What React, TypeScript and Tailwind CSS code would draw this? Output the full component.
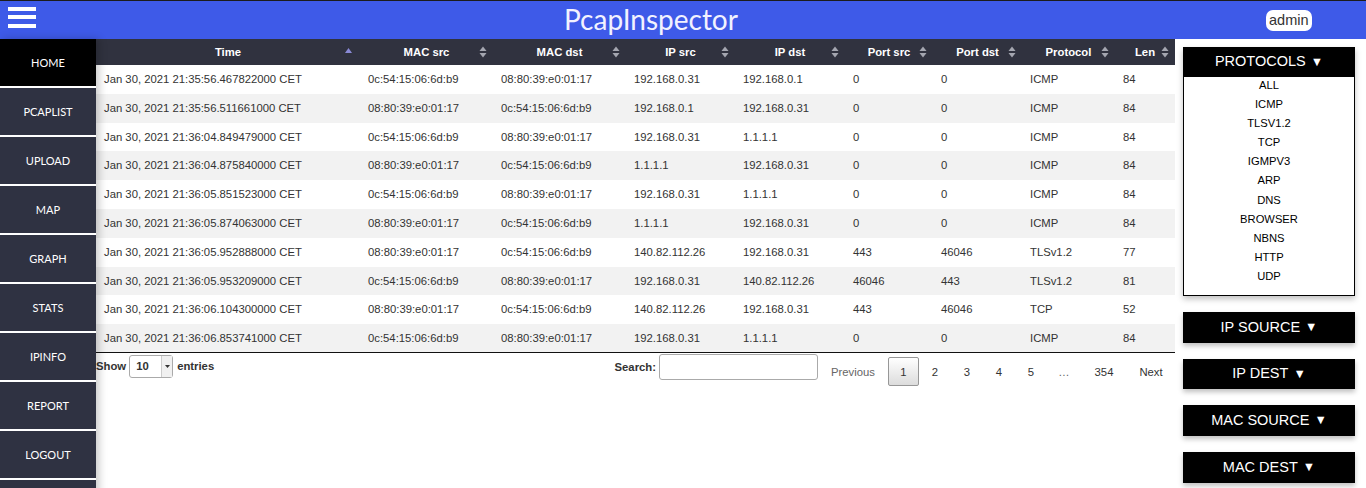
import { useState } from 'react';

const menu = ['HOME', 'PCAPLIST', 'UPLOAD', 'MAP', 'GRAPH', 'STATS', 'IPINFO', 'REPORT', 'LOGOUT', ''];

const columns = [
  { label: 'Time', width: 264 },
  { label: 'MAC src', width: 133 },
  { label: 'MAC dst', width: 133 },
  { label: 'IP src', width: 109 },
  { label: 'IP dst', width: 110 },
  { label: 'Port src', width: 88 },
  { label: 'Port dst', width: 89 },
  { label: 'Protocol', width: 93 },
  { label: 'Len', width: 60 },
];

const A = '0c:54:15:06:6d:b9';
const B = '08:80:39:e0:01:17';

const rows = [
  ['Jan 30, 2021 21:35:56.467822000 CET', A, B, '192.168.0.31', '192.168.0.1', '0', '0', 'ICMP', '84'],
  ['Jan 30, 2021 21:35:56.511661000 CET', B, A, '192.168.0.1', '192.168.0.31', '0', '0', 'ICMP', '84'],
  ['Jan 30, 2021 21:36:04.849479000 CET', A, B, '192.168.0.31', '1.1.1.1', '0', '0', 'ICMP', '84'],
  ['Jan 30, 2021 21:36:04.875840000 CET', B, A, '1.1.1.1', '192.168.0.31', '0', '0', 'ICMP', '84'],
  ['Jan 30, 2021 21:36:05.851523000 CET', A, B, '192.168.0.31', '1.1.1.1', '0', '0', 'ICMP', '84'],
  ['Jan 30, 2021 21:36:05.874063000 CET', B, A, '1.1.1.1', '192.168.0.31', '0', '0', 'ICMP', '84'],
  ['Jan 30, 2021 21:36:05.952888000 CET', B, A, '140.82.112.26', '192.168.0.31', '443', '46046', 'TLSv1.2', '77'],
  ['Jan 30, 2021 21:36:05.953209000 CET', A, B, '192.168.0.31', '140.82.112.26', '46046', '443', 'TLSv1.2', '81'],
  ['Jan 30, 2021 21:36:06.104300000 CET', B, A, '140.82.112.26', '192.168.0.31', '443', '46046', 'TCP', '52'],
  ['Jan 30, 2021 21:36:06.853741000 CET', A, B, '192.168.0.31', '1.1.1.1', '0', '0', 'ICMP', '84'],
];

const protocols = ['ALL', 'ICMP', 'TLSV1.2', 'TCP', 'IGMPV3', 'ARP', 'DNS', 'BROWSER', 'NBNS', 'HTTP', 'UDP'];

const SortIcon = ({ active }: { active?: boolean }) =>
  active ? (
    <svg width="9" height="8" viewBox="0 0 9 8" className="absolute right-[7px] top-[8px]">
      <path d="M4.5 1 L8 6 L1 6 Z" fill="#8a8ad6" />
    </svg>
  ) : (
    <svg width="8" height="12" viewBox="0 0 8 12" className="absolute right-[6px] top-[7px]">
      <path d="M4 0.5 L7.5 5 L0.5 5 Z" fill="#a4a6b0" />
      <path d="M4 11.5 L7.5 7 L0.5 7 Z" fill="#a4a6b0" />
    </svg>
  );

const Dropdown = ({ title }: { title: string }) => (
  <div className="h-[30.7px] bg-black text-white flex items-center justify-center text-[14.5px] shadow-[0_3px_5px_rgba(0,0,0,0.25)]">
    {title} <span className="ml-[5px] text-[12.5px]">▼</span>
  </div>
);

const App = () => {
  const [active] = useState('HOME');

  return (
    <div className="w-[1366px] h-[488px] overflow-hidden bg-white font-['Liberation_Sans',Arial,sans-serif]">
      {/* top bar */}
      <header className="h-[39px] bg-[#3e5ae8] border-t border-[#1c1c1c] flex items-center">
        <div className="w-[44px] pl-[8px] flex flex-col gap-[4.5px] mt-[-6px]">
          <span className="block w-[28px] h-[4px] bg-white" />
          <span className="block w-[28px] h-[4px] bg-white" />
          <span className="block w-[28px] h-[4px] bg-white" />
        </div>
        <h1 className="flex-1 text-center text-[#f2f2ff] text-[28px] leading-none font-['Lato',sans-serif] pb-[2px]">
          PcapInspector
        </h1>
        <div className="w-[108px] pl-[8px]">
          <span className="inline-block bg-white rounded-[7px] px-[3px] h-[21px] leading-[21px] text-[14.5px] text-[#333]">
            admin
          </span>
        </div>
      </header>

      <div className="flex">
        {/* sidebar */}
        <nav className="w-[96px] shrink-0 relative z-10 shadow-[3px_0_8px_rgba(0,0,0,0.22)]">
          {menu.map((m) => (
            <div
              key={m || 'blank'}
              className={`h-[49px] pt-[2px] border-b-2 border-white flex items-center justify-center text-white text-[11px] font-['Lato',sans-serif] ${
                m === active ? 'bg-black' : 'bg-[#2f3242]'
              }`}
            >
              {m}
            </div>
          ))}
        </nav>

        {/* table */}
        <main className="w-[1079px] shrink-0">
          <table className="table-fixed border-collapse w-[1079px] text-[11.3px] text-[#333]">
            <colgroup>
              {columns.map((c) => (
                <col key={c.label} style={{ width: c.width }} />
              ))}
            </colgroup>
            <thead>
              <tr className="h-[26px] bg-[#30323f] text-white">
                {columns.map((c, i) => (
                  <th key={c.label} className="relative font-bold text-center pr-[12px] pl-[12px]">
                    {c.label}
                    <SortIcon active={i === 0} />
                  </th>
                ))}
              </tr>
            </thead>
            <tbody className="border-b border-[#111]">
              {rows.map((r, i) => (
                <tr key={i} className={`h-[28.8px] ${i % 2 === 1 ? 'bg-[#f2f2f2]' : 'bg-white'}`}>
                  {r.map((v, j) => (
                    <td key={j} className="pl-[8px] whitespace-nowrap">
                      {v}
                    </td>
                  ))}
                </tr>
              ))}
            </tbody>
          </table>

          <div className="flex items-start text-[11.3px] text-[#333] mt-[1px]">
            <div className="flex items-center h-[24px] font-bold">
              Show
              <div className="ml-[3px] mr-[4px] w-[44px] h-[23px] border border-[#aaa] rounded-[3px] flex items-center bg-white">
                <span className="flex-1 pl-[6px]">10</span>
                <span className="w-[11px] h-full border-l border-[#ccc] bg-[#f0f0f0] flex items-center justify-center">
                  <svg width="5" height="3" viewBox="0 0 5 3">
                    <path d="M0 0 L5 0 L2.5 3 Z" fill="#333" />
                  </svg>
                </span>
              </div>
              entries
            </div>

            <div className="ml-auto flex items-center h-[26px] font-bold">
              Search:
              <input className="ml-[3px] w-[159px] h-[26px] border border-[#aaa] rounded-[3px] bg-white" />
            </div>

            <div className="flex items-center ml-[12px] mt-[3px] h-[29px]">
              <span className="w-[46px] text-center text-[#666] mr-[12px]">Previous</span>
              <span className="w-[31px] h-[29px] border border-[#979797] rounded-[2px] bg-gradient-to-b from-white to-[#dcdcdc] flex items-center justify-center">
                1
              </span>
              {['2', '3', '4', '5'].map((p) => (
                <span key={p} className="w-[32px] text-center">
                  {p}
                </span>
              ))}
              <span className="w-[34px] text-center text-[#666]">…</span>
              <span className="w-[46px] text-center">354</span>
              <span className="w-[48px] text-center">Next</span>
            </div>
          </div>
        </main>

        {/* filters */}
        <aside className="flex-1 pl-[8px] pr-[11px] pt-[8px] flex flex-col gap-[16px]">
          <div className="shadow-[0_3px_6px_rgba(0,0,0,0.25)]">
            <div className="h-[30px] bg-black text-white flex items-center justify-center text-[14.5px]">
              PROTOCOLS <span className="ml-[5px] text-[12.5px]">▼</span>
            </div>
            <ul className="border border-black border-t-0 bg-white pb-[8px] text-[11.2px] text-black text-center">
              {protocols.map((p) => (
                <li key={p} className="h-[19.1px] leading-[17px]">
                  {p}
                </li>
              ))}
            </ul>
          </div>
          <Dropdown title="IP SOURCE" />
          <Dropdown title="IP DEST" />
          <Dropdown title="MAC SOURCE" />
          <Dropdown title="MAC DEST" />
        </aside>
      </div>
    </div>
  );
};

export default App;
